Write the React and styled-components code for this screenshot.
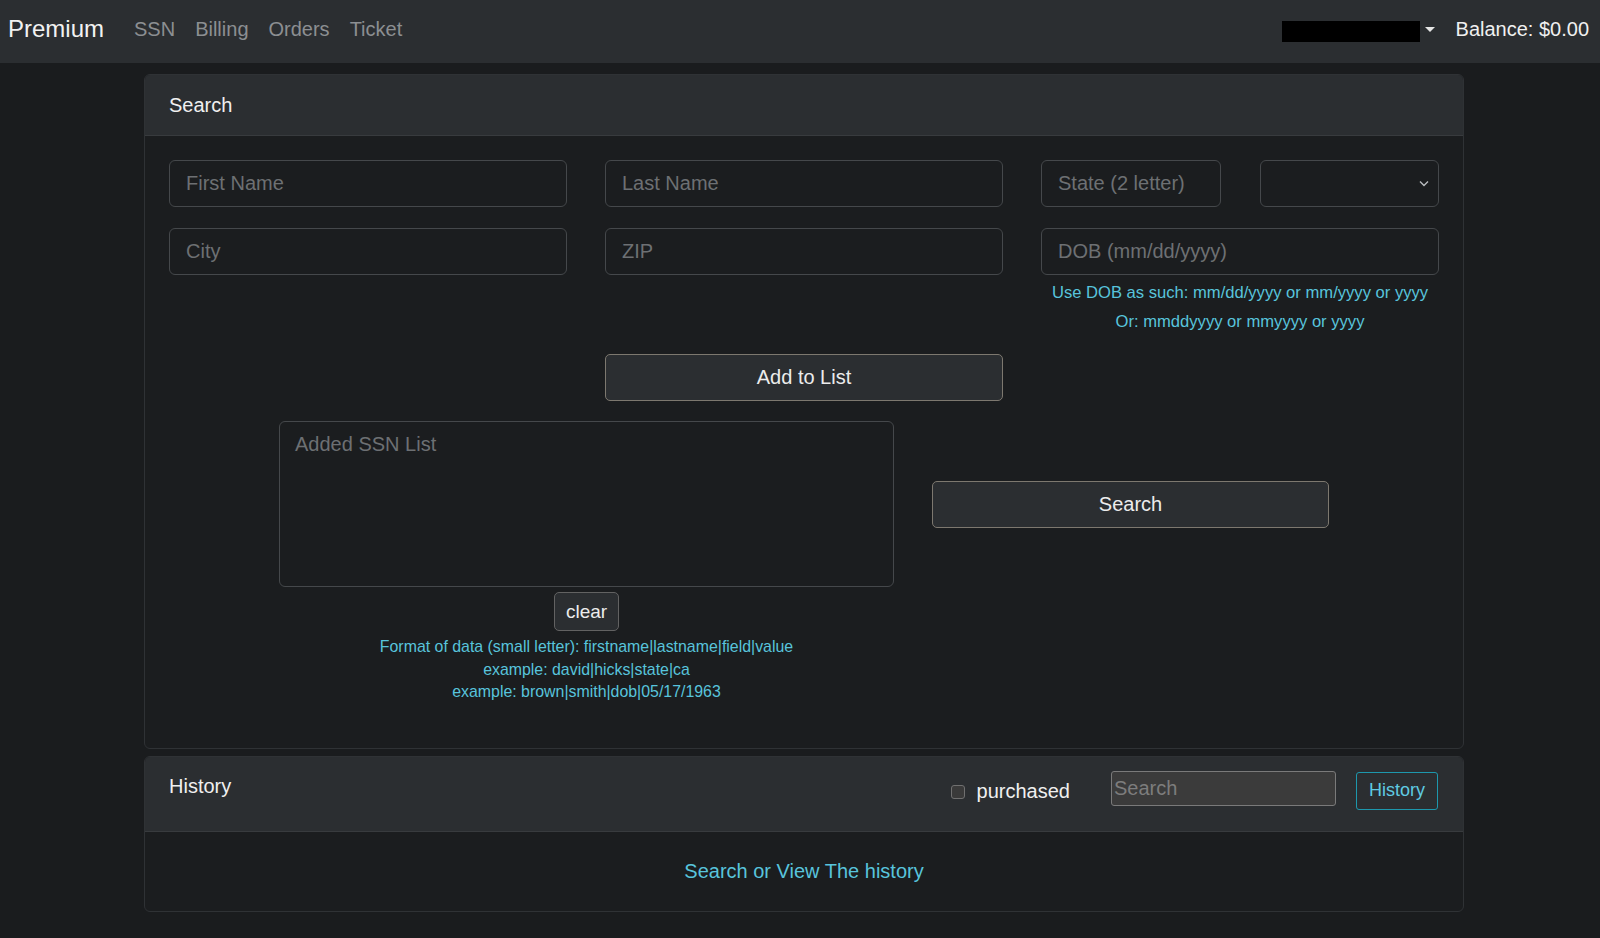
import React from 'react';
import styled, { createGlobalStyle } from 'styled-components';

const GlobalStyle = createGlobalStyle`
  * { box-sizing: border-box; }
  body {
    margin: 0;
    background: #1a1c1e;
    font-family: "Liberation Sans", Arial, sans-serif;
    color: #e6e6e6;
  }
  input, textarea, button, select { font-family: inherit; }
`;

const CYAN = '#58c4dc';

const Navbar = styled.nav`
  height: 63px;
  background: #2b2e31;
  display: flex;
  align-items: center;
  padding: 0 11px 5px 8px;
`;

const Brand = styled.a`
  font-size: 24px;
  color: #f2f2f2;
  text-decoration: none;
  margin-right: 20px;
`;

const NavLink = styled.a`
  font-size: 20px;
  color: #8c8f92;
  text-decoration: none;
  padding: 0 10px;
`;

const NavRight = styled.div`
  margin-left: auto;
  display: flex;
  align-items: center;
`;

const Redacted = styled.span`
  display: inline-block;
  width: 138px;
  height: 21px;
  background: #000;
  margin-top: 4px;
`;

const Caret = styled.span`
  width: 0;
  height: 0;
  border-left: 5px solid transparent;
  border-right: 5px solid transparent;
  border-top: 5px solid #e6e6e6;
  margin: 0 21px 0 5px;
`;

const Balance = styled.span`
  font-size: 20px;
  color: #f0f0f0;
`;

const Main = styled.main`
  padding: 11px 136px 27px 144px;
  display: flex;
  flex-direction: column;
  gap: 7px;
`;

const Card = styled.section`
  background: #1b1d1f;
  border: 1px solid #2f3235;
  border-radius: 6px;
  overflow: hidden;
`;

const CardHeader = styled.header`
  background: #2b2e31;
  border-bottom: 1px solid #383b3e;
  padding: ${p => p.$tall ? '14px 25px 21px 24px' : '15px 24px'};
  display: flex;
  align-items: flex-start;
`;

const CardTitle = styled.h2`
  margin: 0;
  font-size: 20px;
  font-weight: 400;
  line-height: 30px;
  color: #f0f0f0;
`;

const CardBody = styled.div`
  padding: ${p => p.$pad || '24px 24px 25px'};
`;

const FieldGrid = styled.div`
  display: grid;
  grid-template-columns: repeat(3, 1fr);
  column-gap: 38px;
  row-gap: 21px;
  align-items: start;
`;

const SplitCell = styled.div`
  display: grid;
  grid-template-columns: 1fr 1fr;
  column-gap: 39px;
`;

const Input = styled.input`
  width: 100%;
  height: 47px;
  background: #1b1d1f;
  border: 1px solid #45484b;
  border-radius: 6px;
  padding: 0 16px;
  font-size: 20px;
  color: #e6e6e6;
  outline: none;
  &::placeholder { color: #6d7073; }
`;

const SelectWrap = styled.div`
  position: relative;
`;

const Select = styled.select`
  width: 100%;
  height: 47px;
  background: #1b1d1f;
  border: 1px solid #45484b;
  border-radius: 6px;
  appearance: none;
  color: #e6e6e6;
  font-size: 20px;
  outline: none;
`;

const Chevron = styled.svg`
  position: absolute;
  right: 10px;
  top: 20px;
  pointer-events: none;
`;

const Hint = styled.p`
  margin: ${p => p.$first ? '5px 0 0' : '4px 0 0'};
  font-size: 16.6px;
  line-height: 25px;
  color: ${CYAN};
  text-align: center;
`;

const CenterRow = styled.div`
  display: flex;
  justify-content: center;
  margin-top: 20px;
`;

const Button = styled.button`
  width: ${p => p.$width || 'auto'};
  height: ${p => p.$height || '47px'};
  padding: 0 ${p => p.$px || '12px'};
  background: #2b2e31;
  border: 1px solid ${p => p.$border || '#7d786f'};
  border-radius: 5px;
  color: #ececec;
  font-size: ${p => p.$size || '20px'};
  cursor: pointer;
`;

const ListArea = styled.div`
  display: grid;
  grid-template-columns: 615px 397px;
  column-gap: 38px;
  justify-content: center;
  align-items: center;
  margin-top: 20px;
`;

const TextArea = styled.textarea`
  width: 100%;
  height: 166px;
  background: #1b1d1f;
  border: 1px solid #45484b;
  border-radius: 6px;
  padding: 10px 15px;
  font-size: 20px;
  line-height: 24px;
  color: #e6e6e6;
  resize: none;
  outline: none;
  &::placeholder { color: #6d7073; }
`;

const ListFooter = styled.div`
  grid-column: 1;
  display: flex;
  flex-direction: column;
  align-items: center;
  margin-top: 5px;
`;

const Notes = styled.div`
  margin-top: 5px;
  text-align: center;
  font-size: 15.9px;
  line-height: 22.5px;
  color: ${CYAN};
`;

const HeaderControls = styled.div`
  margin-left: auto;
  display: flex;
  align-items: flex-start;
`;

const CheckLabel = styled.label`
  display: flex;
  align-items: center;
  gap: 12px;
  margin-top: 5px;
  font-size: 20px;
  line-height: 30px;
  color: #f0f0f0;
`;

const CheckBox = styled.span`
  width: 14px;
  height: 14px;
  border: 1px solid #707070;
  border-radius: 3px;
  background: #3a3a3a;
  margin-top: 3px;
`;

const SmallSearch = styled.input`
  width: 225px;
  height: 35px;
  margin-left: 41px;
  background: #3b3b3b;
  border: 1px solid #7a7a7a;
  border-radius: 3px;
  padding: 0 2px;
  font-size: 20px;
  color: #e6e6e6;
  outline: none;
  &::placeholder { color: #7d7d7d; }
`;

const OutlineButton = styled.button`
  height: 38px;
  margin: 1px 0 0 20px;
  padding: 0 12px;
  background: transparent;
  border: 1px solid #1d98ad;
  border-radius: 3px;
  color: #5fcbe2;
  font-size: 18px;
  cursor: pointer;
`;

const EmptyText = styled.p`
  margin: 0;
  text-align: center;
  font-size: 20px;
  line-height: 30px;
  color: ${CYAN};
`;

export default function App() {
  return (
    <>
      <GlobalStyle />
      <Navbar>
        <Brand href="#">Premium</Brand>
        <NavLink href="#">SSN</NavLink>
        <NavLink href="#">Billing</NavLink>
        <NavLink href="#">Orders</NavLink>
        <NavLink href="#">Ticket</NavLink>
        <NavRight>
          <Redacted />
          <Caret />
          <Balance>Balance: $0.00</Balance>
        </NavRight>
      </Navbar>

      <Main>
        <Card>
          <CardHeader>
            <CardTitle>Search</CardTitle>
          </CardHeader>
          <CardBody $pad="24px 24px 44px">
            <FieldGrid>
              <Input placeholder="First Name" />
              <Input placeholder="Last Name" />
              <SplitCell>
                <Input placeholder="State (2 letter)" />
                <SelectWrap>
                  <Select defaultValue="">
                    <option value=""></option>
                  </Select>
                  <Chevron width="10" height="7" viewBox="0 0 10 7">
                    <path d="M1 1.5 L5 5.5 L9 1.5" fill="none" stroke="#b9bcbf" strokeWidth="1.4" />
                  </Chevron>
                </SelectWrap>
              </SplitCell>
              <Input placeholder="City" />
              <Input placeholder="ZIP" />
              <div>
                <Input placeholder="DOB (mm/dd/yyyy)" />
                <Hint $first>Use DOB as such: mm/dd/yyyy or mm/yyyy or yyyy</Hint>
                <Hint>Or: mmddyyyy or mmyyyy or yyyy</Hint>
              </div>
            </FieldGrid>

            <CenterRow>
              <Button $width="398px">Add to List</Button>
            </CenterRow>

            <ListArea>
              <TextArea placeholder="Added SSN List" />
              <Button $width="397px">Search</Button>
              <ListFooter>
                <Button $height="39px" $px="11px" $size="19px" $border="#626262">clear</Button>
                <Notes>
                  <div>Format of data (small letter): firstname|lastname|field|value</div>
                  <div>example: david|hicks|state|ca</div>
                  <div>example: brown|smith|dob|05/17/1963</div>
                </Notes>
              </ListFooter>
            </ListArea>
          </CardBody>
        </Card>

        <Card>
          <CardHeader $tall>
            <CardTitle>History</CardTitle>
            <HeaderControls>
              <CheckLabel>
                <CheckBox />
                purchased
              </CheckLabel>
              <SmallSearch placeholder="Search" />
              <OutlineButton>History</OutlineButton>
            </HeaderControls>
          </CardHeader>
          <CardBody>
            <EmptyText>Search or View The history</EmptyText>
          </CardBody>
        </Card>
      </Main>
    </>
  );
}
